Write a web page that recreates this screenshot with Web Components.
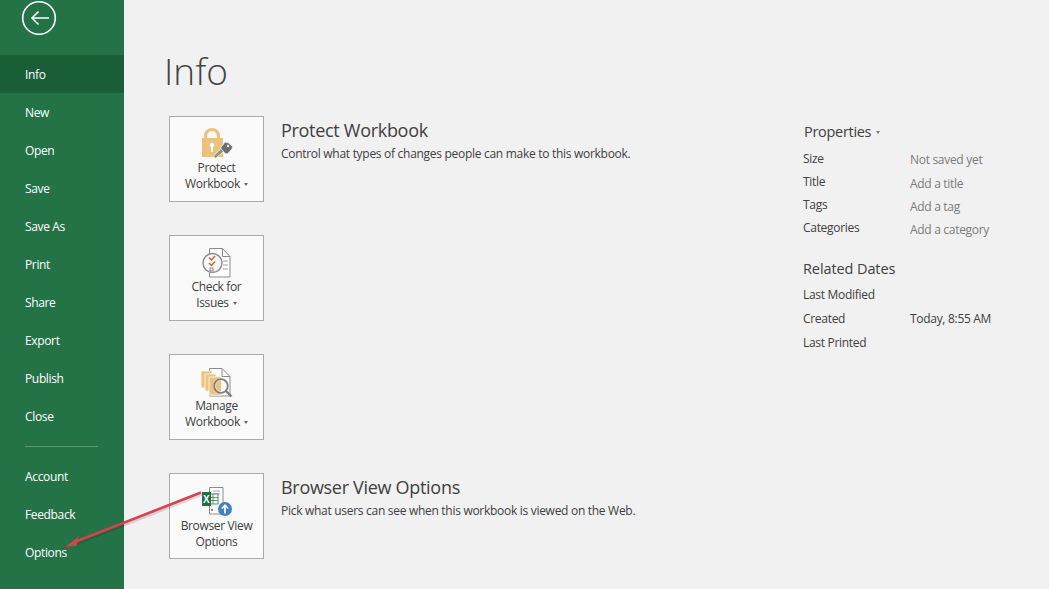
<!DOCTYPE html>
<html>
<head>
<meta charset="utf-8">
<title>Info</title>
<style>
  html, body { margin: 0; height: 100%; }
  body { background: #f1f1f1; font-family: "Open Sans", "Liberation Sans", sans-serif; overflow: hidden; }
</style>
</head>
<body>
<backstage-view>
  <side-nav slot="nav">
    <nav-item selected>Info</nav-item>
    <nav-item>New</nav-item>
    <nav-item>Open</nav-item>
    <nav-item>Save</nav-item>
    <nav-item>Save As</nav-item>
    <nav-item>Print</nav-item>
    <nav-item>Share</nav-item>
    <nav-item>Export</nav-item>
    <nav-item>Publish</nav-item>
    <nav-item>Close</nav-item>
    <nav-item slot="bottom">Account</nav-item>
    <nav-item slot="bottom">Feedback</nav-item>
    <nav-item slot="bottom">Options</nav-item>
  </side-nav>

  <info-section label="Protect|Workbook" caret title-text="Protect Workbook" desc="Control what types of changes people can make to this workbook.">
    <svg slot="icon" width="41" height="36" viewBox="0 0 41 36">
      <path d="M9.500 15V12a6.500 6.500 0 0 1 13 0V15" fill="none" stroke="#edc27c" stroke-width="3.200"/>
      <rect x="6" y="14" width="21" height="19" fill="#edc27c"/>
      <circle cx="16" cy="21" r="2.300" fill="#fff"/>
      <rect x="15" y="21" width="2" height="7" fill="#fff"/>
      <path d="M19.500 34.500l-2-2.500 9-9 3 3z" fill="#8f8f8f" stroke="#fafafa" stroke-width=".8"/>
      <path d="M24.500 24l4.500-6 3 .5 4.500 4-.5 2.500-4.500 5-2.500-.5z" fill="#6e6e6e" stroke="#fafafa" stroke-width=".8"/>
      <circle cx="32" cy="22" r="1.200" fill="#f4f4f4"/>
    </svg>
  </info-section>

  <info-section label="Check for|Issues" caret>
    <svg slot="icon" width="41" height="36" viewBox="0 0 41 36">
      <path d="M13.500 5.500h13l7.500 8v20.500h-20.500z" fill="#fff" stroke="#8b8b8b"/>
      <path d="M26.500 5.500v8h7.500" fill="none" stroke="#8b8b8b"/>
      <path d="M27 18h5M27 22h5M27 26h5" stroke="#a5a5a5"/>
      <circle cx="16.500" cy="20" r="9.500" fill="#f9f9f9" stroke="#8b8b8b" stroke-width="1.400"/>
      <path d="M13 14.500l2.500 2.500 3.500-4M13 20l2.500 2.500 3.500-4" fill="none" stroke="#d2603c" stroke-width="1.500"/>
      <rect x="14" y="25" width="3" height="3" fill="none" stroke="#8b8b8b"/>
    </svg>
  </info-section>

  <info-section label="Manage|Workbook" caret>
    <svg slot="icon" width="41" height="36" viewBox="0 0 41 36">
      <path d="M13.500 6.500h12.500l8 8v19.500h-20.500z" fill="#fff" stroke="#8b8b8b"/>
      <path d="M26 6.500v8h8" fill="none" stroke="#8b8b8b"/>
      <rect x="5" y="9" width="11" height="17" fill="#edc27c" stroke="#f9f9f9" stroke-width=".8"/>
      <rect x="9" y="12" width="11" height="17" fill="#edc27c" stroke="#f9f9f9" stroke-width=".8"/>
      <rect x="13" y="15" width="12" height="18" fill="#edc27c" stroke="#f9f9f9" stroke-width=".8"/>
      <circle cx="25" cy="24" r="6.800" fill="#fbfbfb" stroke="#7f7f7f" stroke-width="1.800"/>
      <path d="M25 18.500a5.500 5.500 0 0 0 0 11z" fill="#edc27c"/>
      <path d="M30 29l5.500 5.500" stroke="#7f7f7f" stroke-width="2.400"/>
    </svg>
  </info-section>

  <info-section label="Browser View|Options" title-text="Browser View Options" desc="Pick what users can see when this workbook is viewed on the Web.">
    <svg slot="icon" width="41" height="36" viewBox="0 0 41 36">
      <path d="M13.500 6.500h13.500v26.500h-13.500z" fill="#fff" stroke="#8b8b8b"/>
      <path d="M17 10h7M17 13h7" stroke="#a5a5a5"/>
      <rect x="13" y="13" width="9" height="10" fill="#fff" stroke="#217346" stroke-width=".8"/>
      <path d="M17 13v10M13 16.500h9M13 19.500h9" stroke="#217346" stroke-width=".7"/>
      <rect x="6" y="11" width="9" height="14" fill="#1e7145"/>
      <text x="7" y="22" font-family="Liberation Sans, sans-serif" font-size="10" font-weight="700" fill="#fff">X</text>
      <rect x="15" y="28" width="2" height="2" fill="#8b8b8b"/>
      <circle cx="29" cy="28" r="7" fill="#3f80c2"/>
      <path d="M29 32.500v-8M25.800 27.500l3.200-3.300 3.200 3.300" fill="none" stroke="#fff" stroke-width="1.700"/>
    </svg>
  </info-section>

  <prop-panel slot="side"></prop-panel>
</backstage-view>

<script>
class NavItem extends HTMLElement {
  constructor() {
    super();
    this.attachShadow({mode: 'open'}).innerHTML = `
      <style>
        :host {
          display: block;
          height: 38px;
          line-height: 40px;
          padding-left: 25px;
          color: #fff;
          font-size: 12px;
          letter-spacing: -.35px;
        }
        :host([selected]) { background: #195e36; }
      </style>
      <slot></slot>
    `;
  }
}
customElements.define('nav-item', NavItem);

class SideNav extends HTMLElement {
  constructor() {
    super();
    this.attachShadow({mode: 'open'}).innerHTML = `
      <style>
        :host {
          display: block;
          width: 124px;
          height: 100%;
          background: #237347;
        }
        .back { height: 55px; }
        .back svg { display: block; margin-left: 21px; }
        hr {
          border: 0;
          height: 1px;
          margin: 11px 26px 10px 25px;
          background: #5b9877;
        }
      </style>
      <div class="back">
        <svg width="36" height="36" viewBox="0 0 36 36">
          <circle cx="18" cy="18" r="16.300" fill="none" stroke="#fff" stroke-width="1.600"/>
          <path d="M11 18h17M17.500 11.500L11 18l6.500 6.500" fill="none" stroke="#fff" stroke-width="1.600"/>
        </svg>
      </div>
      <slot></slot>
      <hr>
      <slot name="bottom"></slot>
    `;
  }
}
customElements.define('side-nav', SideNav);

class InfoSection extends HTMLElement {
  constructor() {
    super();
    this.attachShadow({mode: 'open'}).innerHTML = `
      <style>
        :host {
          display: flex;
          height: 86px;
          margin-bottom: 33px;
          color: #404040;
        }
        .tile {
          box-sizing: border-box;
          flex: none;
          width: 95px;
          height: 86px;
          padding-top: 7px;
          background: #fafafa;
          border: 1px solid #ababab;
          text-align: center;
          font-size: 12px;
          line-height: 16px;
          letter-spacing: -.35px;
        }
        .pic { height: 36px; }
        :host(:not([caret])) .pic { height: 37px; }
        .pic ::slotted(svg) { display: block; margin: 0 auto; }
        .caret {
          display: inline-block;
          margin-left: 4px;
          vertical-align: 2px;
          border: 2.500px solid transparent;
          border-top: 3px solid #666;
          border-bottom: 0;
        }
        .text { margin-left: 17px; }
        h2 {
          margin: 1px 0 0;
          font-size: 18px;
          line-height: 26px;
          font-weight: 400;
          letter-spacing: -.3px;
        }
        p {
          margin: 2px 0 0;
          font-size: 12px;
          line-height: 18px;
          letter-spacing: -.29px;
        }
      </style>
      <div class="tile">
        <div class="pic"><slot name="icon"></slot></div>
        <div class="label"></div>
      </div>
      <div class="text"><h2></h2><p></p></div>
    `;
  }

  connectedCallback() {
    const [first, second] = this.getAttribute('label').split('|');
    const label = this.shadowRoot.querySelector('.label');
    label.innerHTML = `${first}<br>${second}`;
    if(this.hasAttribute('caret')) {
      label.insertAdjacentHTML('beforeend', '<span class="caret"></span>');
    }
    this.shadowRoot.querySelector('h2').textContent = this.getAttribute('title-text') || '';
    this.shadowRoot.querySelector('p').textContent = this.getAttribute('desc') || '';
  }
}
customElements.define('info-section', InfoSection);

class PropPanel extends HTMLElement {
  constructor() {
    super();
    this.attachShadow({mode: 'open'}).innerHTML = `
      <style>
        :host {
          display: block;
          color: #404040;
          font-size: 12px;
          letter-spacing: -.3px;
        }
        h3 {
          margin: 0;
          font-size: 14.500px;
          line-height: 20px;
          font-weight: 400;
          letter-spacing: -.1px;
        }
        .title { margin-left: 1px; letter-spacing: -.3px; }
        .caret {
          display: inline-block;
          margin-left: 5px;
          vertical-align: 3px;
          border: 2.500px solid transparent;
          border-top: 3px solid #777;
          border-bottom: 0;
        }
        .grid {
          display: grid;
          grid-template-columns: 107px auto;
          line-height: 23px;
        }
        .props { margin-top: 5px; }
        .dates { line-height: 24px; }
        .val { color: #7b7b7b; position: relative; top: 2px; }
        .val.first { top: 1px; }
        .related { margin-top: 20px; margin-bottom: 4px; }
        .dark { color: #404040; }
      </style>
      <h3 class="title">Properties<span class="caret"></span></h3>
      <div class="grid props">
        <span>Size</span><span class="val first">Not saved yet</span>
        <span>Title</span><span class="val">Add a title</span>
        <span>Tags</span><span class="val">Add a tag</span>
        <span>Categories</span><span class="val">Add a category</span>
      </div>
      <h3 class="related">Related Dates</h3>
      <div class="grid dates">
        <span>Last Modified</span><span></span>
        <span>Created</span><span class="dark">Today, 8:55 AM</span>
        <span>Last Printed</span><span></span>
      </div>
    `;
  }
}
customElements.define('prop-panel', PropPanel);

class BackstageView extends HTMLElement {
  constructor() {
    super();
    this.attachShadow({mode: 'open'}).innerHTML = `
      <style>
        :host {
          display: flex;
          position: relative;
          height: 589px;
          overflow: hidden;
        }
        main { flex: 1; padding-left: 45px; display: flex; }
        .col { width: 634px; flex: none; }
        h1 {
          margin: 41px 0 0 -5px;
          height: 75px;
          font-size: 37px;
          line-height: 60px;
          font-weight: 300;
          color: #444;
        }
        aside { padding-top: 122px; }
        .arrow { position: absolute; left: 0; top: 0; pointer-events: none; }
      </style>
      <slot name="nav"></slot>
      <main>
        <div class="col">
          <h1>Info</h1>
          <slot></slot>
        </div>
        <aside><slot name="side"></slot></aside>
      </main>
      <svg class="arrow" width="1049" height="589" viewBox="0 0 1049 589">
        <path d="M201 493L76 542" stroke="#000" stroke-opacity=".13" stroke-width="2.800" transform="translate(1 1.500)"/>
        <path d="M201 492.500L76 541.500" stroke="#dc3f50" stroke-width="2.600"/>
        <path d="M65 547l13.500-10-2 8.500z" fill="#dc3f50"/>
      </svg>
    `;
  }
}
customElements.define('backstage-view', BackstageView);
</script>
</body>
</html>
